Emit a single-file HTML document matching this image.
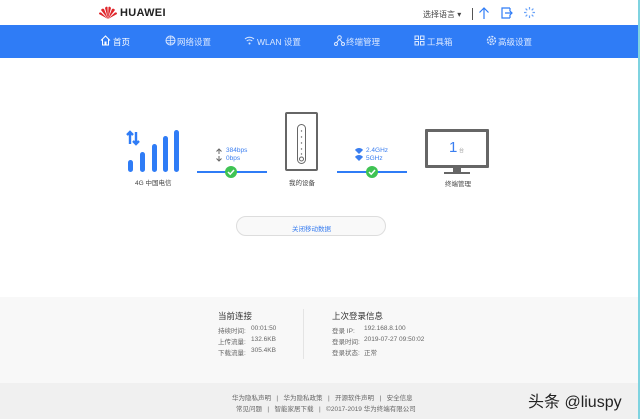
<!DOCTYPE html>
<html><head><meta charset="utf-8">
<style>
*{margin:0;padding:0;box-sizing:border-box}
body{width:640px;height:419px;overflow:hidden;background:#fff;font-family:"Liberation Sans","Noto Sans CJK SC",sans-serif;position:relative;color:#333}
.abs{position:absolute}
.hdr{top:0;left:0;width:640px;height:25px;background:#fff}
.nav{top:25px;left:0;width:638px;height:33px;background:#2f7cf6;color:#dbe8ff;font-size:8.5px}
.nav span{position:absolute;top:11px;white-space:nowrap}
.info{top:297px;left:0;width:638px;height:86px;background:#f8f8f8}
.foot{top:383px;left:0;width:638px;height:36px;background:#f0f0f0}
.edge{top:0;left:638px;width:2px;height:419px;background:#7fd3e0}
.sm{font-size:6.5px;color:#666;white-space:nowrap}
.bl{color:#3a7ef0}
</style></head><body>
<div class="abs hdr">
  <svg class="abs" style="left:99px;top:6px" width="18" height="13" viewBox="0 0 18 13">
    <g fill="#e0262b"><path d="M9 13 L6 2 Q7 0 8.5 1 Z"/><path d="M9 13 L12 2 Q11 0 9.5 1 Z"/><path d="M9 13 L2 4 Q3 2 5 3 Z"/><path d="M9 13 L16 4 Q15 2 13 3 Z"/><path d="M9 13 L0 8 Q0 6 2 6.5 Z"/><path d="M9 13 L18 8 Q18 6 16 6.5 Z"/></g>
  </svg>
  <div class="abs" style="left:120px;top:7px;font-size:11px;font-weight:bold;color:#222;letter-spacing:0.3px">HUAWEI</div>
  <div class="abs sm" style="left:423px;top:9px;font-size:8px;color:#444">选择语言 ▾</div>
  <div class="abs" style="left:472px;top:8px;width:1px;height:12px;background:#555"></div>
  <svg class="abs" style="left:478px;top:7px" width="12" height="13" viewBox="0 0 12 13"><path d="M6 12V1M1.5 5.5L6 1l4.5 4.5" stroke="#2f7cf6" fill="none" stroke-width="1.2"/></svg>
  <svg class="abs" style="left:501px;top:7px" width="12" height="12" viewBox="0 0 12 12"><path d="M9 1H1v10h8M9 8.5V11" stroke="#2f7cf6" fill="none" stroke-width="1.2"/><path d="M9 1v2.5M4 6h7M8.5 3.5L11 6 8.5 8.5" stroke="#2f7cf6" fill="none" stroke-width="1.2"/></svg>
  <svg class="abs" style="left:524px;top:7px" width="11" height="11" viewBox="0 0 11 11"><g stroke="#6aa3f8" stroke-width="1.2"><path d="M5.5 0v2.5M5.5 8.5V11M0 5.5h2.5M8.5 5.5H11M1.6 1.6l1.7 1.7M7.7 7.7l1.7 1.7M9.4 1.6L7.7 3.3M3.3 7.7L1.6 9.4"/></g></svg>
</div>
<div class="abs nav">
  <svg class="abs" style="left:100px;top:10px" width="11" height="11" viewBox="0 0 11 11"><path d="M1 5.5L5.5 1 10 5.5M2.5 4.5V10h2.5V7h1v3h2.5V4.5" stroke="#fff" fill="none" stroke-width="1"/></svg>
  <span style="left:113px;color:#fff">首页</span>
  <svg class="abs" style="left:165px;top:10px" width="11" height="11" viewBox="0 0 11 11"><circle cx="5.5" cy="5.5" r="4.5" stroke="#dbe8ff" fill="none"/><path d="M1 5.5h9M5.5 1v9M2 3h7M2 8h7" stroke="#dbe8ff" stroke-width=".7"/></svg>
  <span style="left:177px">网络设置</span>
  <svg class="abs" style="left:244px;top:11px" width="11" height="9" viewBox="0 0 11 9"><path d="M1 3a6.5 6.5 0 0 1 9 0M2.7 5a4 4 0 0 1 5.6 0" stroke="#dbe8ff" fill="none"/><circle cx="5.5" cy="7.5" r="1" fill="#dbe8ff"/></svg>
  <span style="left:257px">WLAN 设置</span>
  <svg class="abs" style="left:334px;top:10px" width="11" height="11" viewBox="0 0 11 11"><g stroke="#dbe8ff" fill="none"><circle cx="5.5" cy="2.5" r="1.8"/><circle cx="2" cy="9" r="1.5"/><circle cx="9" cy="9" r="1.5"/><path d="M5.5 4.3L2.5 7.6M5.5 4.3l3 3.3"/></g></svg>
  <span style="left:346px">终端管理</span>
  <svg class="abs" style="left:414px;top:10px" width="11" height="11" viewBox="0 0 11 11"><g stroke="#dbe8ff" fill="none"><rect x="1" y="1" width="3.5" height="3.5"/><rect x="6.5" y="1" width="3.5" height="3.5"/><rect x="1" y="6.5" width="3.5" height="3.5"/><rect x="6.5" y="6.5" width="3.5" height="3.5"/></g></svg>
  <span style="left:427px">工具箱</span>
  <svg class="abs" style="left:486px;top:10px" width="11" height="11" viewBox="0 0 11 11"><circle cx="5.5" cy="5.5" r="4" stroke="#dbe8ff" fill="none" stroke-width="1.4" stroke-dasharray="2 1.1"/><circle cx="5.5" cy="5.5" r="1.6" stroke="#dbe8ff" fill="none"/></svg>
  <span style="left:498px">高级设置</span>
</div>

<svg class="abs" style="left:126px;top:130px" width="54" height="44" viewBox="0 0 54 44">
  <g fill="#2f7cf6">
    <rect x="2" y="30" width="5" height="12" rx="2.5"/>
    <rect x="14" y="22" width="5" height="20" rx="2.5"/>
    <rect x="26" y="14" width="5" height="28" rx="2.5"/>
    <rect x="37" y="6" width="5" height="36" rx="2.5"/>
    <rect x="48" y="0" width="5" height="42" rx="2.5"/>
  </g>
  <path d="M4 2v12M1 5l3-3 3 3M10 2v12M7 11l3 3 3-3" stroke="#2f7cf6" stroke-width="2.4" fill="none"/>
</svg>
<div class="abs sm" style="left:135px;top:177px;color:#444">4G 中国电信</div>

<svg class="abs" style="left:215px;top:148px" width="8" height="14" viewBox="0 0 8 14"><path d="M4 6V1M1.5 3.5L4 1l2.5 2.5M4 8v5M1.5 10.5L4 13l2.5-2.5" stroke="#666" fill="none"/></svg>
<div class="abs sm bl" style="left:226px;top:147px">384bps</div>
<div class="abs sm bl" style="left:226px;top:155px">0bps</div>
<div class="abs" style="left:197px;top:171px;width:70px;height:2px;background:#2f7cf6"></div>
<svg class="abs" style="left:225px;top:166px" width="12" height="12" viewBox="0 0 12 12"><circle cx="6" cy="6" r="6" fill="#3fc353"/><path d="M3 6l2.2 2.2L9 4" stroke="#fff" stroke-width="1.5" fill="none"/></svg>

<div class="abs" style="left:285px;top:112px;width:33px;height:59px;border:2.5px solid #666;border-radius:2px"></div>
<div class="abs" style="left:297px;top:124px;width:9px;height:40px;border:1.2px solid #666;border-radius:5px"></div>
<svg class="abs" style="left:297px;top:124px" width="9" height="40"><g fill="#666"><circle cx="4.5" cy="7" r=".7"/><circle cx="4.5" cy="13" r=".7"/><circle cx="4.5" cy="19" r=".7"/><circle cx="4.5" cy="25" r=".7"/><circle cx="4.5" cy="30" r=".7"/></g><circle cx="4.5" cy="35" r="2" stroke="#666" fill="none"/></svg>
<div class="abs sm" style="left:289px;top:177px;color:#444">我的设备</div>

<svg class="abs" style="left:355px;top:148px" width="8" height="14" viewBox="0 0 8 14"><g fill="#3a7ef0"><path d="M0 2a5 5 0 0 1 8 0L4 6z"/><path d="M0 9a5 5 0 0 1 8 0L4 13z"/></g></svg>
<div class="abs sm bl" style="left:366px;top:147px">2.4GHz</div>
<div class="abs sm bl" style="left:366px;top:155px">5GHz</div>
<div class="abs" style="left:337px;top:171px;width:70px;height:2px;background:#2f7cf6"></div>
<svg class="abs" style="left:366px;top:166px" width="12" height="12" viewBox="0 0 12 12"><circle cx="6" cy="6" r="6" fill="#3fc353"/><path d="M3 6l2.2 2.2L9 4" stroke="#fff" stroke-width="1.5" fill="none"/></svg>

<div class="abs" style="left:425px;top:129px;width:64px;height:39px;border:3px solid #666;border-radius:1px"></div>
<div class="abs" style="left:453px;top:168px;width:8px;height:4px;background:#666"></div>
<div class="abs" style="left:444px;top:172px;width:26px;height:2px;background:#666"></div>
<div class="abs bl" style="left:449px;top:139px;font-size:15px">1</div>
<div class="abs sm" style="left:459px;top:147px;font-size:5px;color:#999">台</div>
<div class="abs sm" style="left:445px;top:178px;color:#444">终端管理</div>

<div class="abs" style="left:236px;top:216px;width:150px;height:20px;border:1px solid #ddd;border-radius:10px;background:#f9f9f9"></div>
<div class="abs sm bl" style="left:292px;top:223px">关闭移动数据</div>

<div class="abs info">
  <div class="abs" style="left:218px;top:13px;font-size:8.5px;color:#333">当前连接</div>
  <div class="abs sm" style="left:218px;top:28px">持续时间:</div><div class="abs sm" style="left:251px;top:28px">00:01:50</div>
  <div class="abs sm" style="left:218px;top:39px">上传流量:</div><div class="abs sm" style="left:251px;top:39px">132.6KB</div>
  <div class="abs sm" style="left:218px;top:50px">下载流量:</div><div class="abs sm" style="left:251px;top:50px">305.4KB</div>
  <div class="abs" style="left:303px;top:12px;width:1px;height:50px;background:#e4e4e4"></div>
  <div class="abs" style="left:332px;top:13px;font-size:8.5px;color:#333">上次登录信息</div>
  <div class="abs sm" style="left:332px;top:28px">登录 IP:</div><div class="abs sm" style="left:364px;top:28px">192.168.8.100</div>
  <div class="abs sm" style="left:332px;top:39px">登录时间:</div><div class="abs sm" style="left:364px;top:39px">2019-07-27 09:50:02</div>
  <div class="abs sm" style="left:332px;top:50px">登录状态:</div><div class="abs sm" style="left:364px;top:50px">正常</div>
</div>
<div class="abs foot">
  <div class="abs sm" style="left:232px;top:9px">华为隐私声明 &nbsp;&nbsp;|&nbsp;&nbsp; 华为隐私政策 &nbsp;&nbsp;|&nbsp;&nbsp; 开源软件声明 &nbsp;&nbsp;|&nbsp;&nbsp; 安全信息</div>
  <div class="abs sm" style="left:236px;top:20px">常见问题 &nbsp;&nbsp;|&nbsp;&nbsp; 智能家居下载 &nbsp;&nbsp;|&nbsp;&nbsp; ©2017-2019 华为终端有限公司</div>
  <div class="abs" style="left:528px;top:5px;font-size:16px;color:#222;white-space:nowrap">头条 @liuspy</div>
</div>
<div class="abs edge"></div>
</body></html>
